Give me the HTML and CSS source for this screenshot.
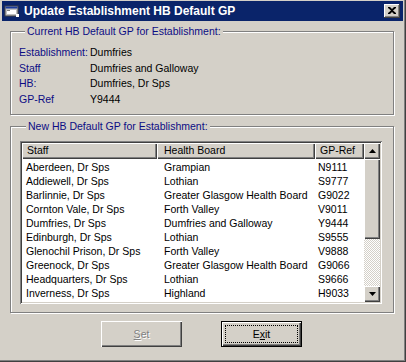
FILE: index.html
```html
<!DOCTYPE html>
<html>
<head>
<meta charset="utf-8">
<link rel="stylesheet" href="styles.css">
</head>
<body>
<div class="window">
  <div class="titlebar">
    <svg class="ticon" width="16" height="16" viewBox="0 0 16 16">
      <rect x="1" y="3" width="13" height="10" fill="#c0c0c0" stroke="#404040" stroke-width="1"/>
      <rect x="1.5" y="3.5" width="12" height="2" fill="#1a3a9a"/>
      <rect x="3" y="7" width="9" height="4" fill="#ffffff"/>
      <rect x="3" y="7" width="3" height="1" fill="#808080"/>
      <rect x="12" y="11" width="3" height="3" fill="#ffffff"/>
    </svg>
    <span class="title">Update Establishment HB Default GP</span>
    <div class="close">
      <svg width="8" height="7" viewBox="0 0 8 7"><path d="M0 0h2l2 2 2-2h2v1L5 3.5 8 6v1H6L4 5 2 7H0V6l3-2.5L0 1z" fill="#000"/></svg>
    </div>
  </div>
  <div class="content">
    <fieldset class="group g1">
      <legend>Current HB Default GP for Establishment:</legend>
      <div class="info">
        <span class="lbl">Establishment:</span><span class="val">Dumfries</span>
        <span class="lbl">Staff</span><span class="val">Dumfries and Galloway</span>
        <span class="lbl">HB:</span><span class="val">Dumfries, Dr Sps</span>
        <span class="lbl">GP-Ref</span><span class="val">Y9444</span>
      </div>
    </fieldset>
    <fieldset class="group g2">
      <legend>New HB Default GP for Establishment:</legend>
      <div class="listview">
        <div class="lv-main">
          <div class="lv-head">
            <div class="hc c1">Staff</div>
            <div class="hc c2">Health Board</div>
            <div class="hc c3">GP-Ref</div>
          </div>
          <div class="lv-rows">
            <div class="row"><span class="c1">Aberdeen, Dr Sps</span><span class="c2">Grampian</span><span class="c3">N9111</span></div>
            <div class="row"><span class="c1">Addiewell, Dr Sps</span><span class="c2">Lothian</span><span class="c3">S9777</span></div>
            <div class="row"><span class="c1">Barlinnie, Dr Sps</span><span class="c2">Greater Glasgow Health Board</span><span class="c3">G9022</span></div>
            <div class="row"><span class="c1">Cornton Vale, Dr Sps</span><span class="c2">Forth Valley</span><span class="c3">V9011</span></div>
            <div class="row"><span class="c1">Dumfries, Dr Sps</span><span class="c2">Dumfries and Galloway</span><span class="c3">Y9444</span></div>
            <div class="row"><span class="c1">Edinburgh, Dr Sps</span><span class="c2">Lothian</span><span class="c3">S9555</span></div>
            <div class="row"><span class="c1">Glenochil Prison, Dr Sps</span><span class="c2">Forth Valley</span><span class="c3">V9888</span></div>
            <div class="row"><span class="c1">Greenock, Dr Sps</span><span class="c2">Greater Glasgow Health Board</span><span class="c3">G9066</span></div>
            <div class="row"><span class="c1">Headquarters, Dr Sps</span><span class="c2">Lothian</span><span class="c3">S9666</span></div>
            <div class="row"><span class="c1">Inverness, Dr Sps</span><span class="c2">Highland</span><span class="c3">H9033</span></div>
            <div class="row"><span class="c1">Kilmarnock, Dr Sps</span><span class="c2">Ayrshire and Arran</span><span class="c3">A9044</span></div>
          </div>
        </div>
        <div class="vscroll">
          <div class="sbtn"><svg width="7" height="4" viewBox="0 0 7 4"><path d="M3.5 0L7 4H0z" fill="#000"/></svg></div>
          <div class="thumb"></div>
          <div class="track"></div>
          <div class="sbtn"><svg width="7" height="4" viewBox="0 0 7 4"><path d="M0 0h7L3.5 4z" fill="#000"/></svg></div>
        </div>
      </div>
    </fieldset>
    <div class="buttons">
      <div class="btn disabled"><span><u>S</u>et</span></div>
      <div class="btn default"><span class="focus">E<u>x</u>it</span></div>
    </div>
  </div>
</div>
</body>
</html>
```
FILE: styles.css
```css
html, body {
  margin: 0;
  padding: 0;
  background: #d4d0c8;
}
body {
  font-family: "Liberation Sans", Arial, sans-serif;
  font-size: 10.5px;
  color: #000;
}
.window {
  box-sizing: border-box;
  width: 406px;
  height: 362px;
  padding: 1px 3px 3px 2px;
  background: #d4d0c8;
  box-shadow: inset -1px -1px #404040, inset -2px -2px #808080;
  display: flex;
  flex-direction: column;
  overflow: hidden;
}
.titlebar {
  height: 20px;
  background: #0a246a;
  display: flex;
  align-items: center;
  padding: 0 3px 0 2px;
  flex: none;
}
.ticon {
  flex: none;
  margin-right: 4px;
}
.title {
  color: #fff;
  font-weight: bold;
  font-size: 12px;
  flex: 1;
  white-space: nowrap;
}
.close {
  width: 16px;
  height: 14px;
  box-sizing: border-box;
  background: #d4d0c8;
  box-shadow: inset -1px -1px #404040, inset 1px 1px #fff, inset -2px -2px #808080;
  display: flex;
  align-items: center;
  justify-content: center;
  padding-bottom: 1px;
}
.content {
  padding: 4px 9px 0 8px;
  display: flex;
  flex-direction: column;
}
.group {
  margin: 0;
  border: 1px solid #808080;
  box-shadow: inset 1px 1px #fff, 1px 1px #fff;
  min-width: 0;
}
.group legend {
  padding: 0 2px;
  margin-left: 6px;
  color: #0c0c84;
  line-height: 13px;
  background: #d4d0c8;
}
.g1 {
  padding: 6px 8px 7px 8px;
}
.info {
  display: grid;
  grid-template-columns: 71px 1fr;
  grid-auto-rows: 15.7px;
  align-items: center;
}
.lbl {
  color: #0c0c84;
}
.g2 {
  margin-top: 5px;
  padding: 8px 0 8px 9px;
}
.listview {
  width: 362px;
  height: 163px;
  box-sizing: border-box;
  padding: 2px;
  background: #fff;
  box-shadow: inset 1px 1px #808080, inset -1px -1px #fff, inset 2px 2px #404040, inset -2px -2px #d4d0c8;
  display: flex;
  overflow: hidden;
}
.lv-main {
  flex: 1;
  overflow: hidden;
}
.lv-head {
  display: flex;
  height: 16px;
}
.lv-rows {
  padding-top: 1px;
}
.hc {
  box-sizing: border-box;
  background: #d4d0c8;
  box-shadow: inset 1px 1px #fff, inset -1px -1px #404040, inset -2px -2px #808080;
  padding-left: 5px;
  line-height: 15px;
  white-space: nowrap;
}
.c1 { width: 135px; flex: none; }
.c2 { width: 158px; flex: none; }
.c3 { width: 49px; flex: none; }
.row {
  display: flex;
  height: 14px;
  line-height: 14px;
  white-space: nowrap;
}
.row span {
  box-sizing: border-box;
  padding-left: 4px;
}
.row .c2 { padding-left: 7px; }
.row .c3 { padding-left: 3px; }
.hc.c2 { padding-left: 7px; }
.vscroll {
  width: 16px;
  flex: none;
  display: flex;
  flex-direction: column;
}
.sbtn {
  height: 16px;
  flex: none;
  box-sizing: border-box;
  background: #d4d0c8;
  box-shadow: inset 1px 1px #fff, inset -1px -1px #404040, inset -2px -2px #808080;
  display: flex;
  align-items: center;
  justify-content: center;
}
.thumb {
  height: 80px;
  flex: none;
  background: #d4d0c8;
  box-shadow: inset 1px 1px #fff, inset -1px -1px #404040, inset -2px -2px #808080;
}
.track {
  flex: 1;
  background: repeating-conic-gradient(#d4d0c8 0 25%, #fff 0 50%) 0 0 / 2px 2px;
}
.buttons {
  display: flex;
  justify-content: center;
  gap: 39px;
  margin-top: 8px;
  padding-right: 1px;
}
.btn {
  width: 81px;
  height: 26px;
  box-sizing: border-box;
  background: #d4d0c8;
  display: flex;
  align-items: center;
  justify-content: center;
  box-shadow: inset 1px 1px #fff, inset -1px -1px #404040, inset -2px -2px #808080;
}
.btn.disabled {
  color: #808080;
  text-shadow: 1px 1px #fff;
}
.btn.default {
  border: 1px solid #000;
  box-shadow: inset 1px 1px #fff, inset -1px -1px #404040, inset -2px -2px #808080;
  padding: 3px;
}
.focus {
  flex: 1;
  align-self: stretch;
  display: flex;
  align-items: center;
  justify-content: center;
  border: 1px dotted #000;
}
```
